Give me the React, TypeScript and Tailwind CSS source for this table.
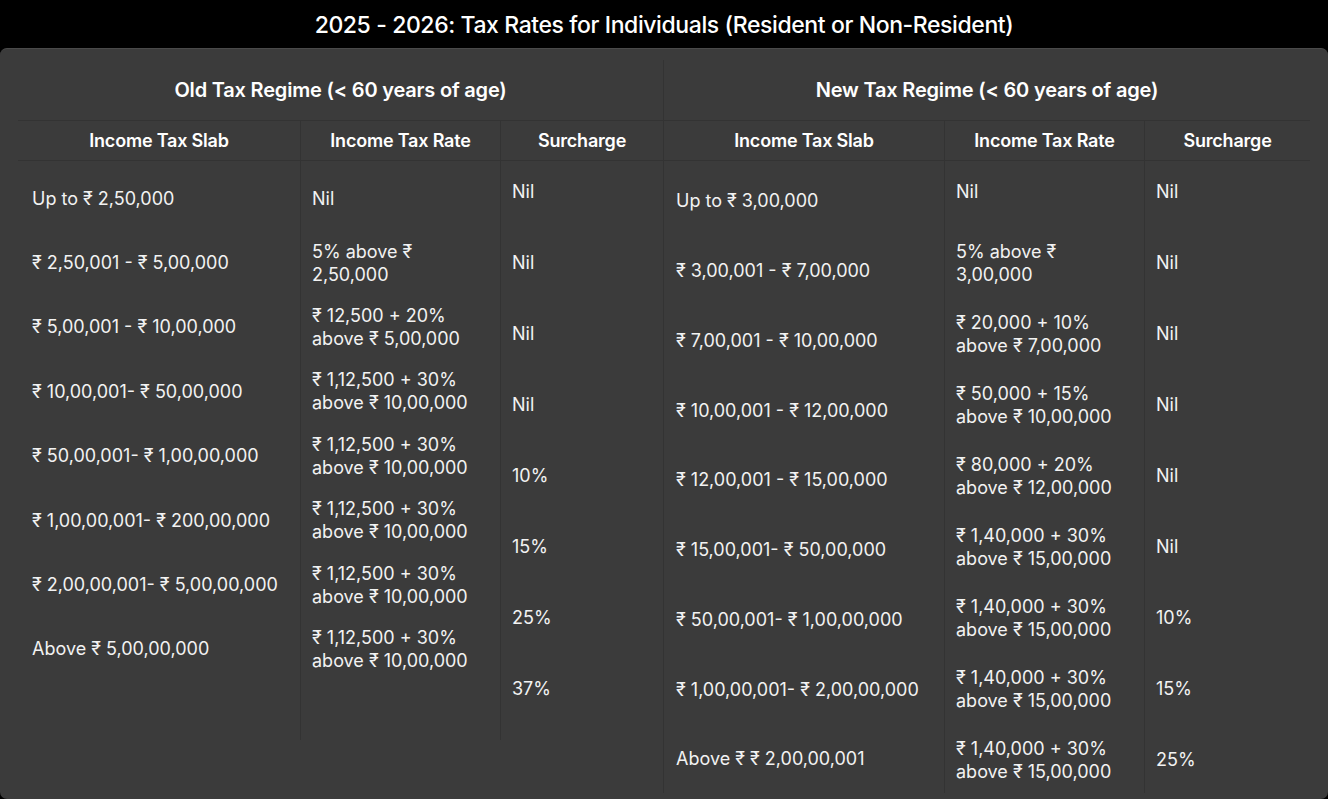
import React from "react";

type Cell = string | string[];

const oldRegime = {
  slab: [
    "Up to ₹ 2,50,000",
    "₹ 2,50,001 - ₹ 5,00,000",
    "₹ 5,00,001 - ₹ 10,00,000",
    "₹ 10,00,001- ₹ 50,00,000",
    "₹ 50,00,001- ₹ 1,00,00,000",
    "₹ 1,00,00,001- ₹ 200,00,000",
    "₹ 2,00,00,001- ₹ 5,00,00,000",
    "Above ₹ 5,00,00,000",
  ],
  rate: [
    "Nil",
    ["5% above ₹", "2,50,000"],
    ["₹ 12,500 + 20%", "above ₹ 5,00,000"],
    ["₹ 1,12,500 + 30%", "above ₹ 10,00,000"],
    ["₹ 1,12,500 + 30%", "above ₹ 10,00,000"],
    ["₹ 1,12,500 + 30%", "above ₹ 10,00,000"],
    ["₹ 1,12,500 + 30%", "above ₹ 10,00,000"],
    ["₹ 1,12,500 + 30%", "above ₹ 10,00,000"],
  ] as Cell[],
  surcharge: ["Nil", "Nil", "Nil", "Nil", "10%", "15%", "25%", "37%"],
};

const newRegime = {
  slab: [
    "Up to ₹ 3,00,000",
    "₹ 3,00,001 - ₹ 7,00,000",
    "₹ 7,00,001 - ₹ 10,00,000",
    "₹ 10,00,001 - ₹ 12,00,000",
    "₹ 12,00,001 - ₹ 15,00,000",
    "₹ 15,00,001- ₹ 50,00,000",
    "₹ 50,00,001- ₹ 1,00,00,000",
    "₹ 1,00,00,001- ₹ 2,00,00,000",
    "Above ₹ ₹ 2,00,00,001",
  ],
  rate: [
    "Nil",
    ["5% above ₹", "3,00,000"],
    ["₹ 20,000 + 10%", "above ₹ 7,00,000"],
    ["₹ 50,000 + 15%", "above ₹ 10,00,000"],
    ["₹ 80,000 + 20%", "above ₹ 12,00,000"],
    ["₹ 1,40,000 + 30%", "above ₹ 15,00,000"],
    ["₹ 1,40,000 + 30%", "above ₹ 15,00,000"],
    ["₹ 1,40,000 + 30%", "above ₹ 15,00,000"],
    ["₹ 1,40,000 + 30%", "above ₹ 15,00,000"],
  ] as Cell[],
  surcharge: ["Nil", "Nil", "Nil", "Nil", "Nil", "Nil", "10%", "15%", "25%"],
};

const CellText = ({ value }: { value: Cell }) =>
  Array.isArray(value) ? (
    <div>
      {value.map((line, i) => (
        <div key={i} className="whitespace-nowrap">{line}</div>
      ))}
    </div>
  ) : (
    <div className="whitespace-nowrap">{value}</div>
  );

const HeaderCell = ({ label }: { label: string }) => (
  <div className="h-[41px] shrink-0 border-y border-[#333333] flex items-center justify-center text-[18px] font-semibold text-white tracking-[-0.2px]">
    {label}
  </div>
);

const OldTable = () => (
  <div className="flex h-[620px] shrink-0">
    {/* Slab */}
    <div className="w-[282px] flex flex-col">
      <HeaderCell label="Income Tax Slab" />
      <div className="flex flex-col pt-[5px] pl-[14px]">
        {oldRegime.slab.map((s, i) => (
          <div key={i} className="h-[64.4px] shrink-0 flex items-center">
            <CellText value={s} />
          </div>
        ))}
      </div>
    </div>
    {/* Rate */}
    <div className="w-[200px] flex flex-col border-l border-[#333333]">
      <HeaderCell label="Income Tax Rate" />
      <div className="flex flex-col pt-[5px] pl-[11px]">
        {oldRegime.rate.map((r, i) => (
          <div key={i} className="h-[64.4px] shrink-0 flex items-center">
            <CellText value={r} />
          </div>
        ))}
      </div>
    </div>
    {/* Surcharge */}
    <div className="flex-1 flex flex-col border-l border-[#333333]">
      <HeaderCell label="Surcharge" />
      <div className="flex flex-col -mt-[5px] pl-[11px]">
        {oldRegime.surcharge.map((s, i) => (
          <div key={i} className="h-[71px] shrink-0 flex items-center">
            <CellText value={s} />
          </div>
        ))}
      </div>
    </div>
  </div>
);

const NewTable = () => (
  <div className="flex flex-1 min-h-0">
    <div className="w-[280px] flex flex-col">
      <HeaderCell label="Income Tax Slab" />
      <div className="flex flex-col pt-[5px] pl-[12px]">
        {newRegime.slab.map((s, i) => (
          <div key={i} className="h-[69.75px] shrink-0 flex items-center">
            <CellText value={s} />
          </div>
        ))}
      </div>
    </div>
    <div className="w-[200px] flex flex-col border-l border-[#333333]">
      <HeaderCell label="Income Tax Rate" />
      <div className="flex flex-col -mt-[5px] pl-[11px]">
        {newRegime.rate.map((r, i) => (
          <div key={i} className="h-[71px] shrink-0 flex items-center">
            <CellText value={r} />
          </div>
        ))}
      </div>
    </div>
    <div className="flex-1 flex flex-col border-l border-[#333333]">
      <HeaderCell label="Surcharge" />
      <div className="flex flex-col -mt-[5px] pl-[11px]">
        {newRegime.surcharge.map((s, i) => (
          <div key={i} className="h-[71px] shrink-0 flex items-center">
            <CellText value={s} />
          </div>
        ))}
      </div>
    </div>
  </div>
);

export default function App() {
  return (
    <div
      className="w-[1328px] h-[799px] bg-black flex flex-col overflow-hidden"
      style={{ fontFamily: 'Inter, "Noto Sans", "DejaVu Sans", sans-serif' }}
    >
      {/* Title */}
      <div className="h-[48px] shrink-0 flex items-center justify-center pt-[2px] text-white text-[23px] font-medium tracking-[-0.4px]">
        2025 - 2026: Tax Rates for Individuals (Resident or Non-Resident)
      </div>

      {/* Card */}
      <div className="flex-1 min-h-0 overflow-hidden flex bg-[#3b3b3b] rounded-[7px] border-t border-[#4a4a4a] pt-[11px] pb-[6px] text-[18px] leading-[23px] text-[#f2f2f2]">
        {/* Old regime */}
        <div className="w-[664px] pl-[18px] flex flex-col border-r border-[#333333]">
          <div className="h-[60px] shrink-0 flex items-center justify-center text-[20px] font-semibold text-white tracking-[-0.2px]">
            Old Tax Regime (&lt; 60 years of age)
          </div>
          <OldTable />
        </div>

        {/* New regime */}
        <div className="flex-1 pr-[18px] flex flex-col">
          <div className="h-[60px] shrink-0 flex items-center justify-center text-[20px] font-semibold text-white tracking-[-0.2px]">
            New Tax Regime (&lt; 60 years of age)
          </div>
          <NewTable />
        </div>
      </div>
    </div>
  );
}
